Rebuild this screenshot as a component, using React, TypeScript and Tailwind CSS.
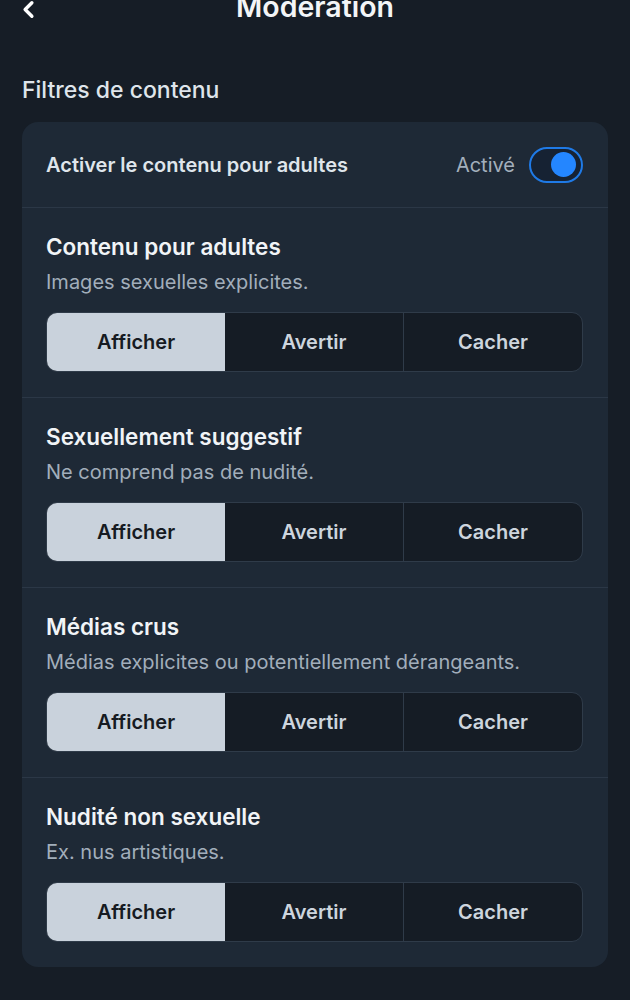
import { ChevronLeft } from "lucide-react";

const filters = [
  { title: "Contenu pour adultes", desc: "Images sexuelles explicites." },
  { title: "Sexuellement suggestif", desc: "Ne comprend pas de nudité." },
  { title: "Médias crus", desc: "Médias explicites ou potentiellement dérangeants." },
  { title: "Nudité non sexuelle", desc: "Ex. nus artistiques." },
];

const options = ["Afficher", "Avertir", "Cacher"];

function Segmented() {
  return (
    <div className="mt-[19px] flex h-[60px] overflow-hidden rounded-[11px] border border-[#2f3b49] bg-[#151c25]">
      {options.map((opt, i) => (
        <div
          key={opt}
          className={`flex flex-1 items-center justify-center text-[20px] font-semibold ${
            i === 0
              ? "bg-[#c9d2dc] text-[#161b22]"
              : "text-[#cdd5de]"
          } ${i === 2 ? "border-l border-[#2f3b49]" : ""}`}
        >
          {opt}
        </div>
      ))}
    </div>
  );
}

export default function App() {
  return (
    <div className="min-h-[1000px] w-full bg-[#161d26] font-['Inter',sans-serif] text-white">
      <header className="relative flex h-[24px] items-center justify-center">
        <button className="absolute left-[15px] top-[-4px] text-white">
          <ChevronLeft className="h-[27px] w-[27px]" strokeWidth={3} />
        </button>
        <h1 className="-mt-[10px] text-[28.5px] font-semibold leading-[34px] text-[#f3f5f7]">
          Modération
        </h1>
      </header>

      <div className="px-[22px]">
        <h2 className="mt-[52px] text-[23px] font-medium leading-[28px] text-[#dfe5eb]">
          Filtres de contenu
        </h2>

        <div className="mt-[18px] overflow-hidden rounded-[16px] bg-[#1e2936]">
          <div className="flex h-[85px] items-center justify-between pl-[24px] pr-[25px]">
            <span className="text-[20px] font-semibold text-[#dfe5eb]">
              Activer le contenu pour adultes
            </span>
            <div className="flex items-center gap-[14px]">
              <span className="text-[20px] text-[#a3afbc]">Activé</span>
              <div className="flex h-[36px] w-[54px] items-center justify-end rounded-full border-2 border-[#1f7ae6] bg-[#162233] pr-[5px]">
                <div className="h-[25px] w-[25px] rounded-full bg-[#2486ff]" />
              </div>
            </div>
          </div>

          {filters.map((f) => (
            <div
              key={f.title}
              className="border-t border-[#2b3746] pl-[24px] pr-[25px] pt-[26px] pb-[25px]"
            >
              <div className="text-[22.5px] font-semibold leading-[26px] text-[#f1f4f7]">
                {f.title}
              </div>
              <div className="mt-[11px] text-[20px] leading-[22px] text-[#a2aebb]">
                {f.desc}
              </div>
              <Segmented />
            </div>
          ))}
        </div>
      </div>
    </div>
  );
}
